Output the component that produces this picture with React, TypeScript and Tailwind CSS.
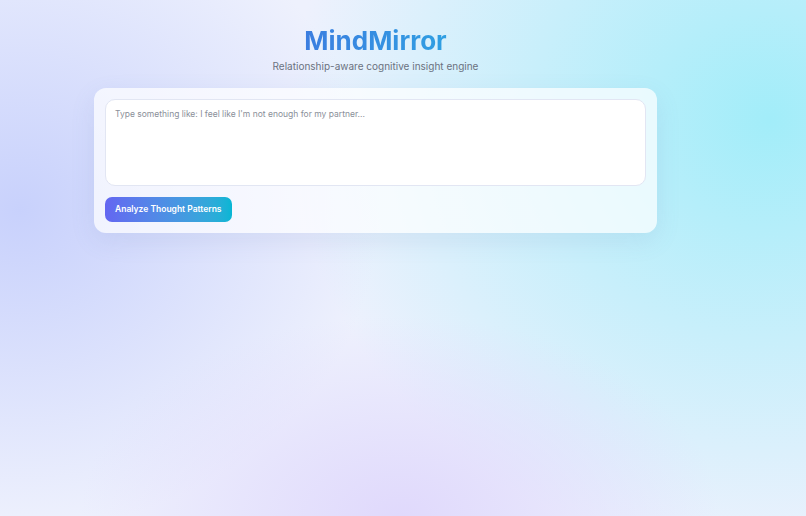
import React, { useState } from "react";

const App: React.FC = () => {
	const [text, setText] = useState("");

	return (
		<div
			className="relative min-h-[516px] w-full overflow-hidden bg-[#eef1fd]"
			style={{ fontFamily: "Inter, 'Noto Sans', sans-serif" }}
		>
			{/* soft colour glows */}
			<div className="pointer-events-none absolute inset-0 bg-[radial-gradient(ellipse_360px_320px_at_20px_210px,#c8d1fc_0%,rgba(200,209,252,0)_100%)]" />
			<div className="pointer-events-none absolute inset-0 bg-[radial-gradient(ellipse_480px_440px_at_770px_120px,#a2edf9_0%,rgba(166,238,249,0)_100%)]" />
			<div className="pointer-events-none absolute inset-0 bg-[radial-gradient(ellipse_320px_200px_at_400px_516px,#e0d9fc_0%,rgba(224,217,252,0)_100%)]" />

			<div className="relative w-[751px] pt-[25px]">
				<div className="mx-auto flex w-[563px] flex-col items-center">
					<h1 className="bg-gradient-to-r from-[#3b7de0] to-[#2f9fe2] bg-clip-text text-[26px] font-bold leading-[31px] text-transparent">
						MindMirror
					</h1>
					<p className="mt-[3px] text-[10px] leading-[14px] text-[#6b7280]">
						Relationship-aware cognitive insight engine
					</p>

					<div className="mt-[15px] w-full rounded-[12px] bg-white/70 p-[11px] shadow-[0_8px_24px_rgba(100,120,180,0.12)]">
						<textarea
							value={text}
							onChange={(e) => setText(e.target.value)}
							placeholder="Type something like: I feel like I'm not enough for my partner..."
							className="block h-[87px] w-full resize-none rounded-[10px] border border-[#e2e6f3] bg-white px-[9px] py-[8px] text-[8.5px] text-gray-700 outline-none placeholder:text-[#8a8f99]"
						/>
						<button className="mt-[11px] h-[25px] rounded-[7px] bg-gradient-to-r from-[#6366f1] to-[#06b6d4] px-[10px] text-[8.5px] font-semibold text-white">
							Analyze Thought Patterns
						</button>
					</div>
				</div>
			</div>
		</div>
	);
};

export default App;
